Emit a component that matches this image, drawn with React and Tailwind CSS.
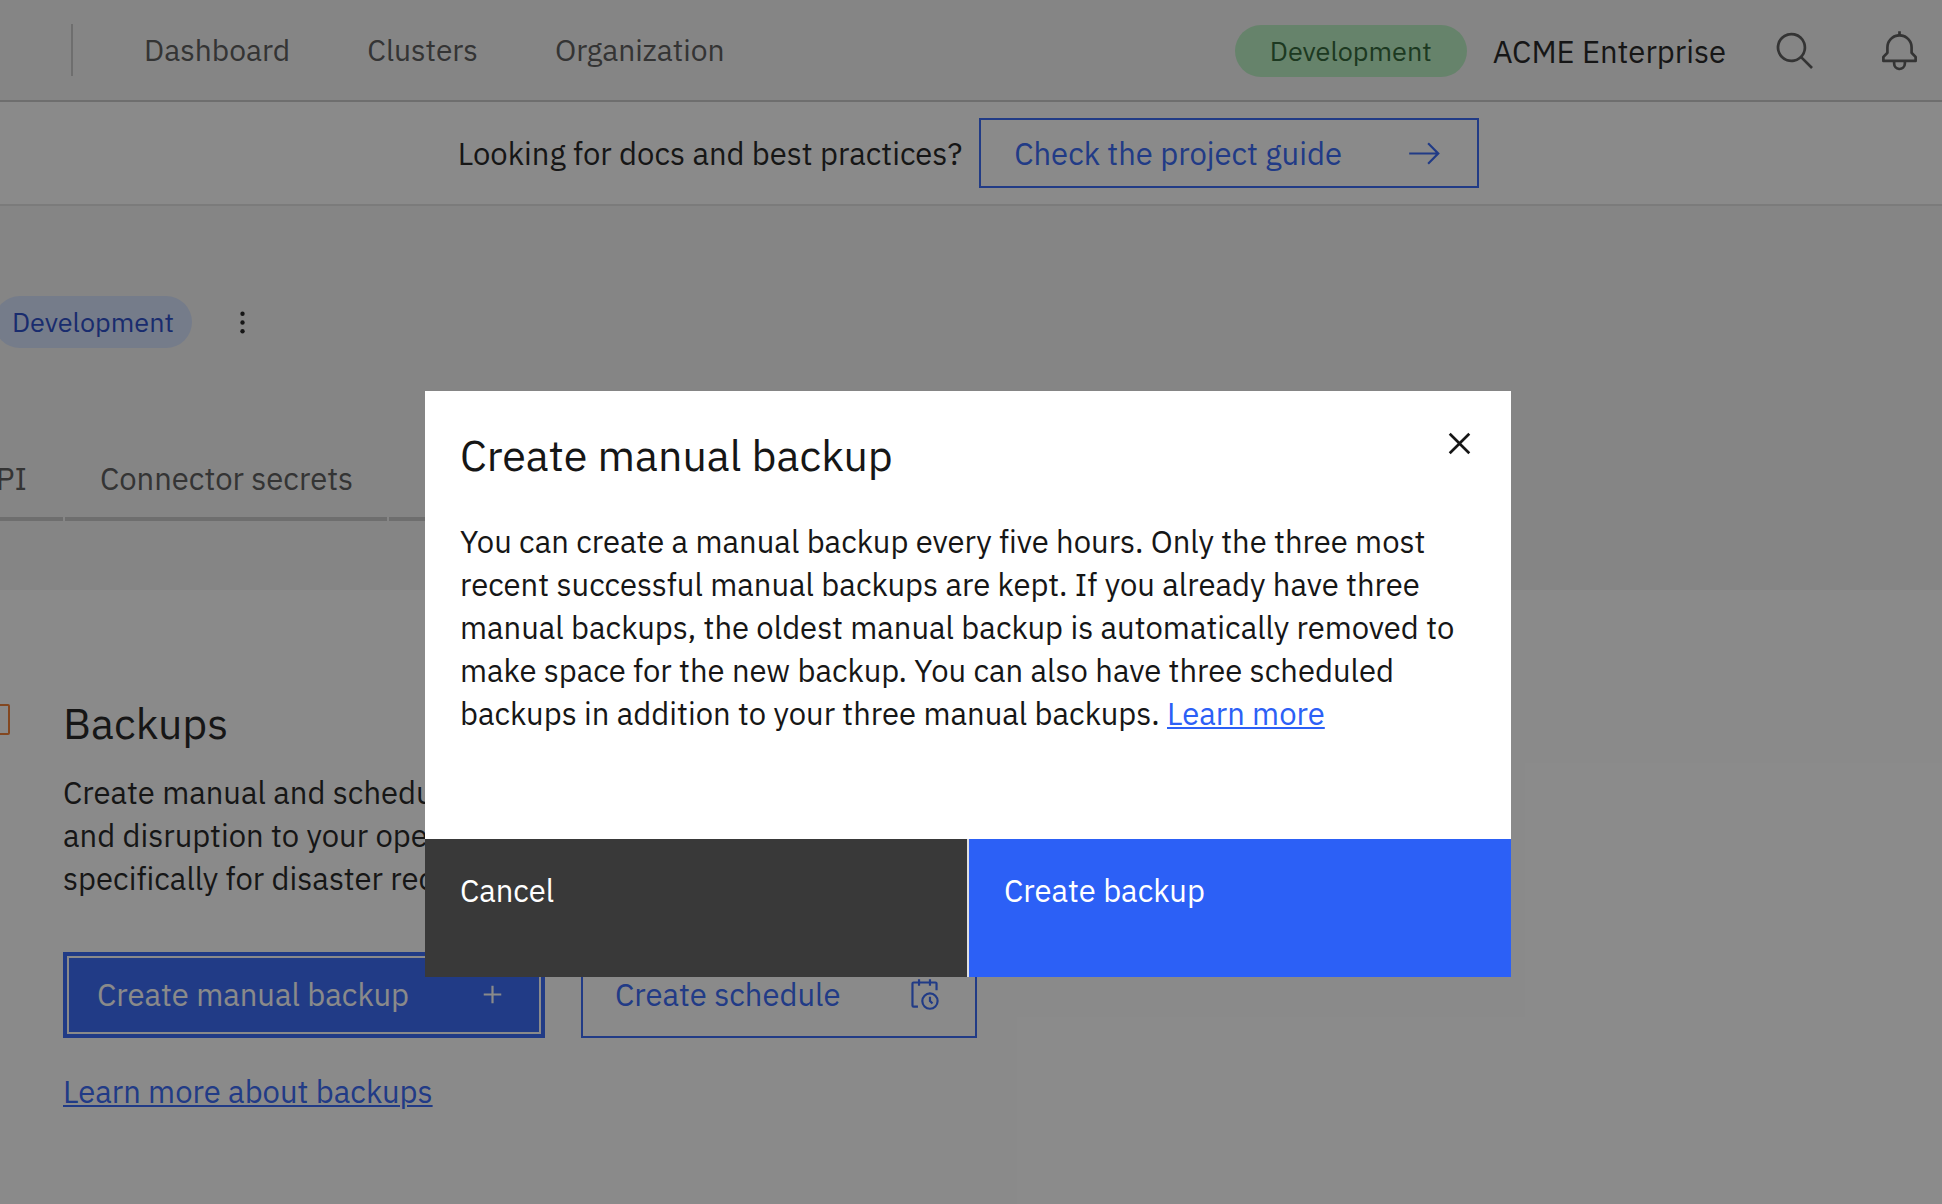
const navItems = ["Dashboard", "Clusters", "Organization"];

function Icon({ size = 32, className = "", children }) {
  return (
    <svg viewBox={`0 0 ${size} ${size}`} className={`shrink-0 ${className}`} fill="currentColor" aria-hidden="true">
      {children}
    </svg>
  );
}

function SearchIcon() {
  return (
    <Icon className="size-[43px]">
      <path d="M29,27.5859l-7.5521-7.5521a11.0177,11.0177,0,1,0-1.4141,1.4141L27.5859,29ZM4,13a9,9,0,1,1,9,9A9.01,9.01,0,0,1,4,13Z" />
    </Icon>
  );
}

function BellIcon() {
  return (
    <Icon className="size-[43px]">
      <path d="M28.7071,19.293,26,16.5859V13a10.0136,10.0136,0,0,0-9-9.9492V1H15V3.0508A10.0136,10.0136,0,0,0,6,13v3.5859L3.2929,19.293A1,1,0,0,0,3,20v3a1,1,0,0,0,1,1h7v.7768a5.152,5.152,0,0,0,4.5,5.1987A5.0057,5.0057,0,0,0,21,25V24h7a1,1,0,0,0,1-1V20A1,1,0,0,0,28.7071,19.293ZM19,25a3,3,0,0,1-6,0V24h6Zm8-3H5V20.4141L7.707,17.707A1,1,0,0,0,8,17V13a8,8,0,0,1,16,0v4a1,1,0,0,0,.293.707L27,20.4141Z" />
    </Icon>
  );
}

function ArrowIcon() {
  return (
    <Icon size={16} className="size-[35px]">
      <path d="M9.3 3.7L13.1 7.5 1 7.5 1 8.5 13.1 8.5 9.3 12.3 10 13 15 8 10 3z" />
    </Icon>
  );
}

function AddIcon() {
  return (
    <Icon className="size-[35px]">
      <path d="M17 15L17 8 15 8 15 15 8 15 8 17 15 17 15 24 17 24 17 17 24 17 24 15z" />
    </Icon>
  );
}

function ScheduleIcon() {
  return (
    <Icon className="size-[35px]">
      <path d="M21,30a8,8,0,1,1,8-8A8,8,0,0,1,21,30Zm0-14a6,6,0,1,0,6,6A6,6,0,0,0,21,16Z" />
      <path d="M22.59 25L20 22.41 20 18 22 18 22 21.59 24 23.59 22.59 25z" />
      <path d="M28,6a2,2,0,0,0-2-2H22V2H20V4H12V2H10V4H6A2,2,0,0,0,4,6V26a2,2,0,0,0,2,2h4V26H6V6h4V8h2V6h8V8h2V6h4v6h2Z" />
    </Icon>
  );
}

function KebabIcon() {
  return (
    <Icon className="size-[35px]">
      <circle cx="16" cy="8" r="2" />
      <circle cx="16" cy="16" r="2" />
      <circle cx="16" cy="24" r="2" />
    </Icon>
  );
}

function CloseIcon() {
  return (
    <Icon className="size-[43px]">
      <path d="M17.4141 16L24 9.4141 22.5859 8 16 14.5859 9.4143 8 8 9.4141 14.5859 16 8 22.5859 9.4143 24 16 17.4141 22.5859 24 24 22.5859 17.4141 16z" />
    </Icon>
  );
}

function Header() {
  return (
    <header className="flex h-[102px] items-center border-b-2 border-[#c6c6c6] bg-[#f4f4f4] pr-[21px]">
      <div className="ml-[71px] h-[52px] w-0.5 bg-[#c6c6c6]" />
      <nav className="ml-[71px] flex gap-[77px] pb-0.5 text-[30px] text-[#525252]">
        {navItems.map((item) => (
          <a key={item} href="#">
            {item}
          </a>
        ))}
      </nav>
      <div className="ml-auto flex items-center pt-0.5">
        <span className="rounded-full bg-[#b6f0c0] px-[35px] text-[27px] leading-[52px] text-[#245c2c]">Development</span>
        <span className="ml-[26px] text-[#161616]">ACME Enterprise</span>
        <button type="button" aria-label="Search" className="ml-[48px] text-[#525252]">
          <SearchIcon />
        </button>
        <button type="button" aria-label="Notifications" className="ml-[61px] text-[#525252]">
          <BellIcon />
        </button>
      </div>
    </header>
  );
}

function GuideBanner() {
  return (
    <section className="flex h-[104px] items-center justify-center gap-[17px] border-b-2 border-[#e0e0e0] bg-white pr-[5px]">
      <p>Looking for docs and best practices?</p>
      <button type="button" className="flex h-[70px] w-[500px] items-center justify-between border-2 border-[#2c60f6] pr-[35px] pl-[33px] text-[#2c60f6]">
        Check the project guide
        <ArrowIcon />
      </button>
    </section>
  );
}

function ClusterHeading() {
  return (
    <section className="h-[384px] bg-[#f4f4f4] pt-[90px]">
      <div className="flex items-center">
        <span className="-ml-1.5 rounded-full bg-[#d4e2fe] px-[18px] text-[27px] leading-[52px] text-[#1c42c6]">Development</span>
        <button type="button" aria-label="Cluster actions" className="ml-[33px]">
          <KebabIcon />
        </button>
      </div>
      <nav className="mt-[88px] flex gap-0.5 text-[#525252]">
        <a href="#" className="-ml-[97px] w-[160px] border-b-4 border-[#c6c6c6] pt-[21px] pr-9 pb-[17px] text-right">
          API
        </a>
        <a href="#" className="w-[322px] border-b-4 border-[#c6c6c6] pt-[21px] pb-[17px] pl-[35px]">
          Connector secrets
        </a>
        <div className="w-[160px] border-b-4 border-[#c6c6c6]" />
      </nav>
    </section>
  );
}

function BackupsSection() {
  return (
    <section className="flex gap-[53px] pt-[103px]">
      <div className="-ml-[21px] mt-[11px] h-[31px] w-[31px] shrink-0 rounded-xs border-2 border-[#f0792a]" />
      <div>
        <h1 className="text-[43px] leading-[60px]">Backups</h1>
        <p className="mt-[18px]">
          Create manual and scheduled
          <br />
          and disruption to your operations
          <br />
          specifically for disaster recovery
        </p>
        <div className="mt-[52px] flex gap-9">
          <button type="button" className="h-[86px] w-[482px] border-4 border-[#2c60f6] text-white">
            <span className="flex h-full items-center justify-between border-2 border-white bg-[#2c60f6] pr-[29px] pb-0.5 pl-7">
              Create manual backup
              <AddIcon />
            </span>
          </button>
          <button type="button" className="flex h-[86px] w-[396px] items-center justify-between border-2 border-[#2c60f6] pr-[33px] pb-0.5 pl-8 text-[#2c60f6]">
            Create schedule
            <ScheduleIcon />
          </button>
        </div>
        <a href="#" className="mt-8 inline-block text-[#2c60f6] underline decoration-2 underline-offset-2">
          Learn more about backups
        </a>
      </div>
    </section>
  );
}

function BackupDialog() {
  return (
    <div className="absolute inset-0 flex items-start justify-center bg-[#161616]/50 pt-[391px] pr-[6px]">
      <div role="dialog" aria-modal="true" aria-labelledby="dialog-title" className="w-[56.1%] bg-white">
        <div className="flex items-start justify-between pr-[30px] pl-[35px]">
          <h2 id="dialog-title" className="pt-[34px] text-[43px] leading-[60px]">
            Create manual backup
          </h2>
          <button type="button" aria-label="Close" className="mt-[31px]">
            <CloseIcon />
          </button>
        </div>
        <p className="pt-[35px] pr-[35px] pb-[104px] pl-[35px]">
          You can create a manual backup every five hours. Only the three most
          <br />
          recent successful manual backups are kept. If you already have three
          <br />
          manual backups, the oldest manual backup is automatically removed to
          <br />
          make space for the new backup. You can also have three scheduled
          <br />
          backups in addition to your three manual backups.{" "}
          <a href="#" className="text-[#2c60f6] underline decoration-2 underline-offset-2">
            Learn more
          </a>
        </p>
        <div className="flex gap-0.5 bg-[#e0e0e0] text-white">
          <button type="button" className="flex h-[138px] flex-1 items-start bg-[#393939] pt-[30px] pl-[35px]">
            Cancel
          </button>
          <button type="button" className="flex h-[138px] flex-1 items-start bg-[#2c60f6] pt-[30px] pl-[35px]">
            Create backup
          </button>
        </div>
      </div>
    </div>
  );
}

export default function App() {
  return (
    <div className="relative min-h-screen overflow-hidden bg-white font-['IBM_Plex_Sans','Roboto',sans-serif] text-[31px] leading-[43px] text-[#161616] [font-variant-ligatures:none]">
      <Header />
      <GuideBanner />
      <ClusterHeading />
      <BackupsSection />
      <BackupDialog />
    </div>
  );
}
